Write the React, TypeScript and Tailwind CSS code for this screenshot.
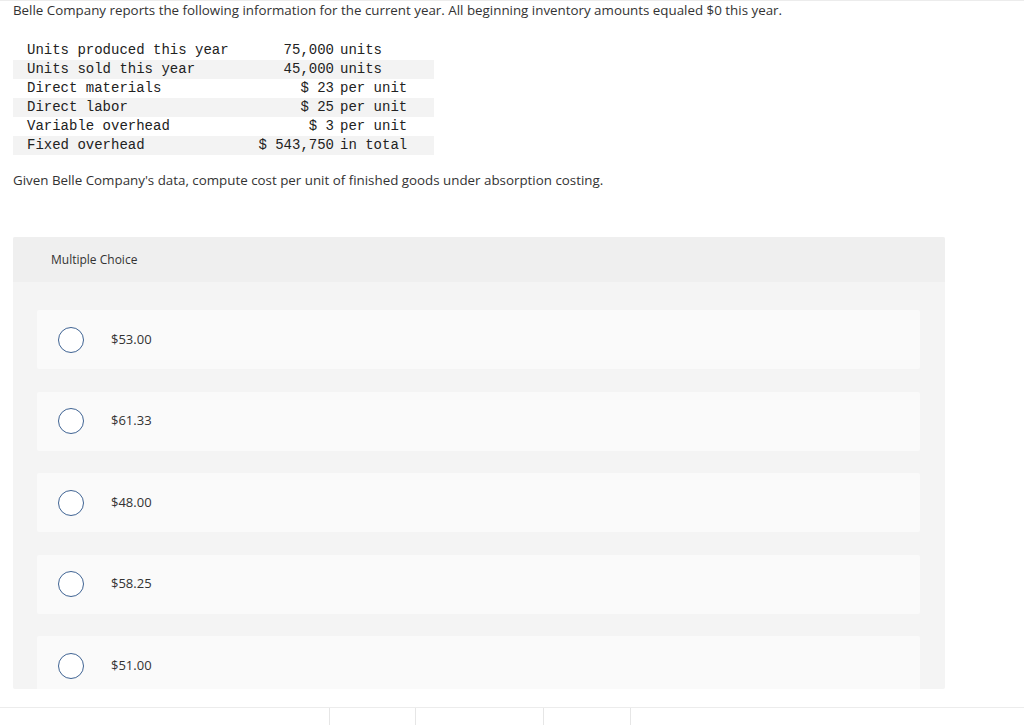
import React from "react";

const rows: [string, string, string][] = [
  ["Units produced this year", "75,000", "units"],
  ["Units sold this year", "45,000", "units"],
  ["Direct materials", "$ 23", "per unit"],
  ["Direct labor", "$ 25", "per unit"],
  ["Variable overhead", "$ 3", "per unit"],
  ["Fixed overhead", "$ 543,750", "in total"],
];

const options = ["$53.00", "$61.33", "$48.00", "$58.25", "$51.00"];

export default function App() {
  return (
    <div
      className="w-[1024px] h-[725px] bg-white overflow-hidden border-t border-[#ececec] text-[#333]"
      style={{ fontFamily: '"Open Sans", "Liberation Sans", Arial, sans-serif' }}
    >
      <div className="h-[706px] overflow-hidden pl-[13px]">
        <p className="text-[13.35px] leading-[18px] mt-[0px] whitespace-nowrap">
          Belle Company reports the following information for the current year. All beginning inventory amounts equaled $0 this year.
        </p>
        <div
          className="mt-[22px] w-[421px] text-[14px] leading-[19px] text-[#222]"
          style={{ fontFamily: '"Liberation Mono", "Courier New", monospace' }}
        >
          {rows.map((r, i) => (
            <div
              key={i}
              className={`grid grid-cols-[237px_84px_100px] h-[19px] ${i % 2 === 1 ? "bg-[#f3f3f3]" : ""}`}
            >
              <div className="pl-[14px] whitespace-pre">{r[0]}</div>
              <div className="text-right whitespace-pre">{r[1]}</div>
              <div className="pl-[6px] whitespace-pre">{r[2]}</div>
            </div>
          ))}
        </div>
        <p className="text-[13.35px] leading-[18px] mt-[16px] whitespace-nowrap">
          Given Belle Company's data, compute cost per unit of finished goods under absorption costing.
        </p>
        <div className="mt-[48px] w-[932px] h-[452px] overflow-hidden rounded-[2px] bg-[#f4f4f4]">
          <div className="h-[45px] bg-[#efefef] flex items-center pl-[38px] text-[12px] text-[#333]">
            Multiple Choice
          </div>
          <div className="pt-[28px] pl-[24px] pr-[25px] flex flex-col gap-[22.5px]">
            {options.map((o) => (
              <div
                key={o}
                className="h-[59px] shrink-0 rounded-[2px] bg-[#fafafa] flex items-center pl-[21px]"
              >
                <div className="w-[26px] h-[26px] rounded-full border border-[#3f6393] bg-white" />
                <span className="ml-[27px] text-[13px] text-[#333]">{o}</span>
              </div>
            ))}
          </div>
        </div>
      </div>
      <div className="border-t border-[#ececec] h-[18px] relative">
        <div className="absolute left-[329px] top-0 h-full border-l border-[#e6e6e6]" />
        <div className="absolute left-[415px] top-0 h-full border-l border-[#e6e6e6]" />
        <div className="absolute left-[543px] top-0 h-full border-l border-[#e6e6e6]" />
        <div className="absolute left-[630px] top-0 h-full border-l border-[#e6e6e6]" />
      </div>
    </div>
  );
}
